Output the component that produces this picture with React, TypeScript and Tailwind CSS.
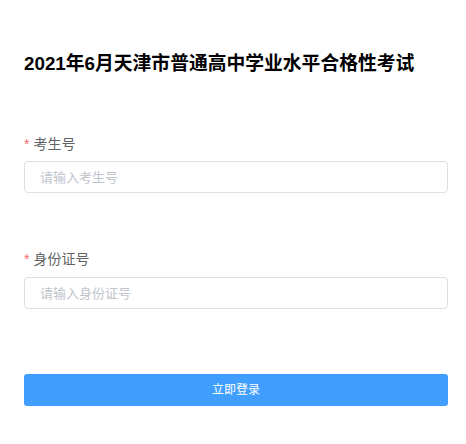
import React from "react";

export default function App() {
  const font = { fontFamily: '"Liberation Sans", "Noto Sans CJK SC", sans-serif' };
  return (
    <div className="w-[466px] h-[444px] bg-white" style={font}>
      <div className="pl-6 pt-[50px] w-[448px]">
        <h1 className="h-7 leading-7 text-[18.8px] font-bold text-black">2021年6月天津市普通高中学业水平合格性考试</h1>

        <div className="mt-[56px]">
          <div className="h-5 leading-5 text-sm text-[#606266] flex items-center">
            <span className="text-[#f56c6c] mr-1 text-sm">*</span>
            <span>考生号</span>
          </div>
          <input
            className="mt-[7px] w-full h-8 border border-[#dcdfe6] rounded-[4px] px-[15px] text-[13px] text-[#606266] placeholder:text-[#c0c4cc] outline-none"
            placeholder="请输入考生号"
          />
        </div>

        <div className="mt-[56px]">
          <div className="h-5 leading-5 text-sm text-[#606266] flex items-center">
            <span className="text-[#f56c6c] mr-1 text-sm">*</span>
            <span>身份证号</span>
          </div>
          <input
            className="mt-[8px] w-full h-8 border border-[#dcdfe6] rounded-[4px] px-[15px] text-[13px] text-[#606266] placeholder:text-[#c0c4cc] outline-none"
            placeholder="请输入身份证号"
          />
        </div>

        <button className="mt-[65px] w-full h-8 bg-[#409eff] rounded-[3px] text-white text-xs">
          立即登录
        </button>
      </div>
    </div>
  );
}
